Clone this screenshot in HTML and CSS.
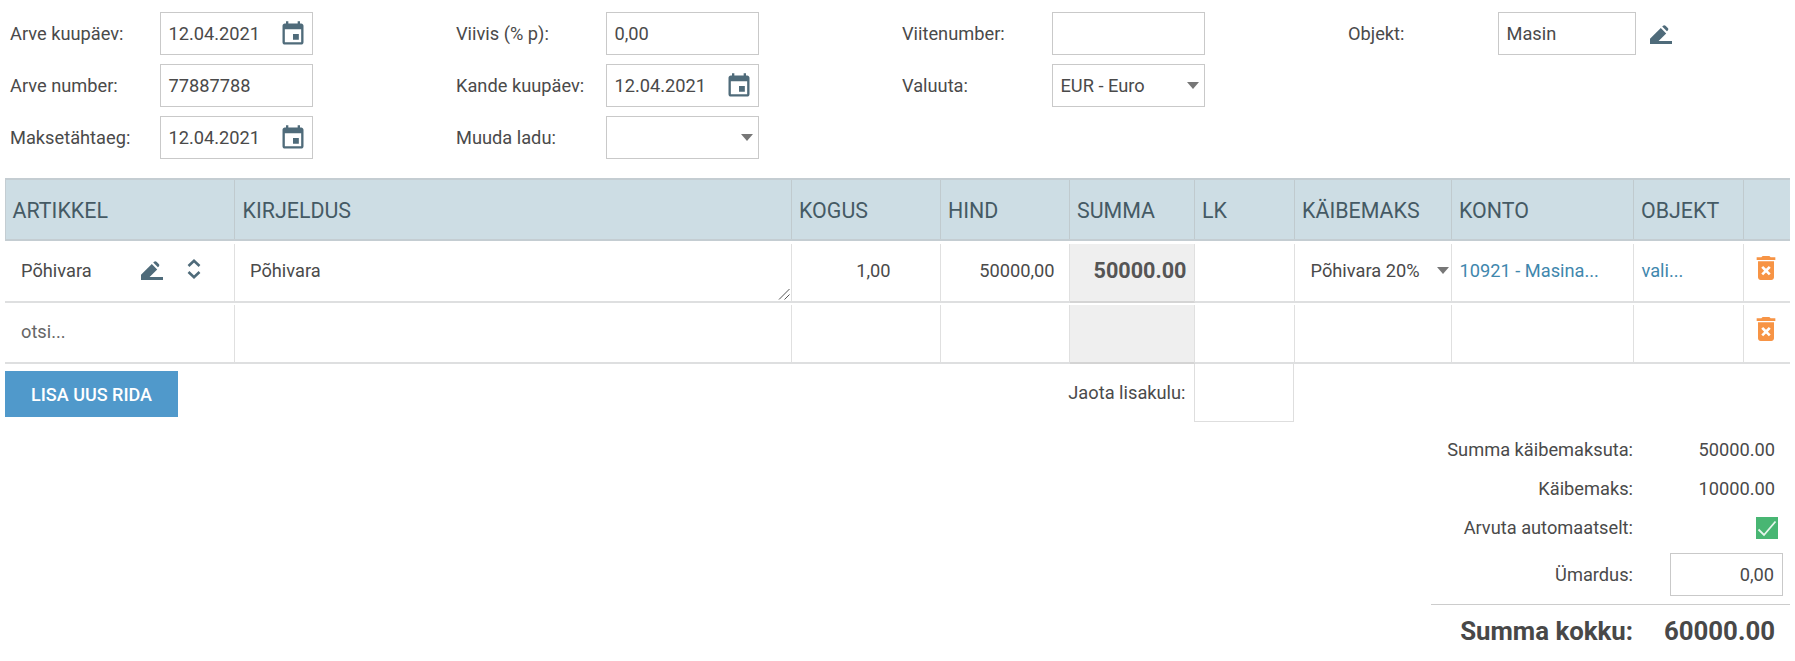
FILE: index.html
```html
<!DOCTYPE html>
<html lang="et">
<head>
<meta charset="utf-8">
<title>Arve</title>
<link rel="stylesheet" href="styles.css">
</head>
<body>
<svg class="defs" width="0" height="0" aria-hidden="true">
  <symbol id="i-cal" viewBox="0 0 24 24"><path d="M17 12h-5v5h5v-5zM16 1v2H8V1H6v2H5c-1.11 0-1.99.9-1.99 2L3 19c0 1.1.89 2 2 2h14c1.1 0 2-.9 2-2V5c0-1.1-.9-2-2-2h-1V1h-2zm3 18H5V8h14v11z"/></symbol>
  <symbol id="i-pen" viewBox="0 0 22 19"><path d="M0 19v-5.2L10.8 3l5.4 5.4L8.6 16H22v3zM12.2 1.6l.9-.9c.7-.7 1.7-.7 2.4 0l2.3 2.3c.7.7.7 1.7 0 2.4l-.9.9z"/></symbol>
  <symbol id="i-del" viewBox="0 0 24 24"><path d="M6 19c0 1.1.9 2 2 2h8c1.1 0 2-.9 2-2V7H6v12zm2.46-7.12l1.41-1.41L12 12.59l2.12-2.12 1.41 1.41L13.41 14l2.12 2.12-1.41 1.41L12 15.41l-2.12 2.12-1.41-1.41L10.59 14l-2.13-2.12zM15.5 4l-1-1h-5l-1 1H5v2h14V4z"/></symbol>
</svg>

<form class="head">
  <div class="field"><span class="lbl">Arve kuupäev:</span><span class="box"><span class="val">12.04.2021</span><svg class="ic-cal"><use href="#i-cal"/></svg></span></div>
  <div class="field"><span class="lbl">Viivis (% p):</span><span class="box"><span class="val">0,00</span></span></div>
  <div class="field"><span class="lbl">Viitenumber:</span><span class="box"></span></div>
  <div class="field"><span class="lbl">Objekt:</span><span class="box narrow"><span class="val">Masin</span></span><svg class="ic-pen top-pen"><use href="#i-pen"/></svg></div>

  <div class="field"><span class="lbl">Arve number:</span><span class="box"><span class="val">77887788</span></span></div>
  <div class="field"><span class="lbl">Kande kuupäev:</span><span class="box"><span class="val">12.04.2021</span><svg class="ic-cal"><use href="#i-cal"/></svg></span></div>
  <div class="field"><span class="lbl">Valuuta:</span><span class="box"><span class="val">EUR - Euro</span><i class="caret"></i></span></div>
  <div class="field"></div>

  <div class="field"><span class="lbl">Maksetähtaeg:</span><span class="box"><span class="val">12.04.2021</span><svg class="ic-cal"><use href="#i-cal"/></svg></span></div>
  <div class="field"><span class="lbl">Muuda ladu:</span><span class="box"><i class="caret"></i></span></div>
</form>

<section class="grid">
  <div class="row thead">
    <div class="th">ARTIKKEL</div><div class="th">KIRJELDUS</div><div class="th">KOGUS</div><div class="th">HIND</div><div class="th">SUMMA</div><div class="th">LK</div><div class="th">KÄIBEMAKS</div><div class="th">KONTO</div><div class="th">OBJEKT</div><div class="th"></div>
  </div>
  <div class="row body">
    <div class="td art"><span class="grow">Põhivara</span><svg class="ic-pen"><use href="#i-pen"/></svg><svg class="ic-sort" viewBox="0 0 14 20"><path d="M1.5 7 7 1.8 12.5 7M1.5 13 7 18.2 12.5 13"/></svg></div>
    <div class="td desc">Põhivara<svg class="handle" viewBox="0 0 12 12"><path d="M11.5 1 1 11.5M11.5 6.5 6.5 11.5"/></svg></div>
    <div class="td num qty">1,00</div>
    <div class="td num">50000,00</div>
    <div class="td sum">50000.00</div>
    <div class="td"></div>
    <div class="td vat"><span class="grow">Põhivara 20%</span><i class="caret"></i></div>
    <div class="td link">10921 - Masina...</div>
    <div class="td link">vali...</div>
    <div class="td act"><svg class="ic-del"><use href="#i-del"/></svg></div>
  </div>
  <div class="row body">
    <div class="td art muted">otsi...</div>
    <div class="td"></div>
    <div class="td"></div>
    <div class="td"></div>
    <div class="td sum"></div>
    <div class="td"></div>
    <div class="td"></div>
    <div class="td"></div>
    <div class="td"></div>
    <div class="td act"><svg class="ic-del"><use href="#i-del"/></svg></div>
  </div>
</section>

<div class="under">
  <button class="add" type="button">LISA UUS RIDA</button>
  <span class="extra-lbl">Jaota lisakulu:</span>
  <span class="extra"></span>
</div>

<section class="totals">
  <div class="t-row"><span class="t-lbl">Summa käibemaksuta:</span><span class="t-val">50000.00</span></div>
  <div class="t-row"><span class="t-lbl">Käibemaks:</span><span class="t-val">10000.00</span></div>
  <div class="t-row"><span class="t-lbl">Arvuta automaatselt:</span><span class="t-val"><span class="check"><svg viewBox="0 0 22 22"><path d="M2.5 12.5 8 18 19.5 4.5"/></svg></span></span></div>
  <div class="t-row round"><span class="t-lbl">Ümardus:</span><span class="box small"><span class="val">0,00</span></span></div>
  <div class="t-row grand"><span class="t-lbl">Summa kokku:</span><span class="t-val">60000.00</span></div>
</section>
</body>
</html>
```
FILE: styles.css
```css
* { box-sizing: border-box; }
html, body { margin: 0; padding: 0; }
body {
  width: 1795px; height: 661px; overflow: hidden; background: #fff;
  font-family: Roboto, "Liberation Sans", sans-serif;
  font-size: 18.24px; font-weight: 400; color: #4a4a4a;
}
.defs { position: absolute; }

.head {
  display: grid; grid-template-columns: repeat(4, 446px);
  grid-auto-rows: 43px; row-gap: 9px;
  padding: 12px 0 0 10px; height: 178px;
}
.field { display: flex; align-items: center; }
.lbl { width: 150px; flex: none; }
.box {
  display: flex; align-items: center; flex: none;
  width: 153px; height: 43px; padding: 0 7.5px;
  border: 1px solid #c9c9c9; background: #fff; position: relative;
}
.box.narrow { width: 138px; }
.val { flex: 1; }
.ic-cal { width: 28px; height: 28px; fill: #4f6b7a; flex: none; margin: 1px -2px 0 0; }
.ic-pen { width: 22px; height: 19px; fill: #4f6b7a; flex: none; }
.top-pen { margin: 2px 0 0 14px; }
.caret {
  width: 0; height: 0; flex: none; margin-left: auto; margin-right: -2px;
  border-left: 6px solid transparent; border-right: 6px solid transparent;
  border-top: 7px solid #777;
}

.grid { margin-left: 5px; width: 1785px; }
.row {
  display: grid;
  grid-template-columns: 230px 556.5px 149px 129px 125px 100px 157px 182px 110px 46.5px;
}
.thead {
  height: 63px; margin-bottom: 1px; background: #cddde4;
  border-top: 2px solid #c4cdd2; border-bottom: 2px solid #c4cdd2;
  box-shadow: inset 1px 0 0 #c4cdd2;
}
.th {
  padding: 2px 0 0 7.5px; display: flex; align-items: center;
  font-size: 21.4px; color: #455a64; border-right: 1px solid #c0cace;
}
.th:last-child { border-right: 0; }
.body { height: 61px; padding-top: 2px; border-bottom: 2px solid #dedfe0; }
.td {
  display: flex; align-items: center; padding: 0 8px 4px; min-width: 0;
  border-right: 1px solid #e0e0e0; position: relative;
}
.td:last-child { border-right: 0; }
.art { padding-left: 16px; }
.grow { flex: 1; }
.art .ic-sort { width: 14px; height: 20px; margin: 0 25px 4px 24px; fill: none; stroke: #4f6b7a; stroke-width: 2.6; flex: none; }
.desc { padding-left: 15px; }
.handle { position: absolute; right: 1px; bottom: 1px; width: 12px; height: 12px; fill: none; stroke: #555; stroke-width: 1; }
.num { justify-content: flex-end; padding-right: 14px; }
.qty { padding-right: 49px; }
.sum {
  justify-content: flex-end; background: #efefef; font-weight: 700; font-size: 21.6px; color: #555;
  margin-bottom: -2px; border-bottom: 2px solid #d4d4d4; padding-right: 7px;
}
.vat { padding-left: 16px; padding-right: 4px; }
.link { color: #3f87ad; padding-left: 8px; }
.act { justify-content: center; padding: 0; }
.ic-del { width: 32px; height: 32px; fill: #f79445; flex: none; margin-left: -2px; margin-bottom: 10px; }
.muted { color: #666; }

.under { display: flex; align-items: flex-start; margin-left: 5px; height: 58px; }
.add {
  margin: 7px 0 0; width: 173px; height: 46px; border: 0; background: #5099cb; color: #fff;
  font: 500 18px Roboto, sans-serif;
}
.extra-lbl { margin-left: auto; line-height: 58px; }
.extra { flex: none; width: 100px; height: 58px; margin: 0 501.5px 0 8px; border: 1px solid #dedede; border-top: 0; }

.totals { margin-left: 1431px; width: 359px; padding-top: 8px; }
.t-row { display: flex; align-items: center; height: 39px; }
.t-lbl { width: 202px; text-align: right; flex: none; }
.t-val { width: 142px; text-align: right; flex: none; }
.check { display: inline-block; width: 22px; height: 22px; background: #48b673; vertical-align: middle; margin-right: -3px; }
.check svg { display: block; fill: none; stroke: #e6f5ec; stroke-width: 1.8; }
.round { height: 43px; margin-top: 6px; }
.box.small { width: 113px; margin-left: 37px; justify-content: flex-end; padding-right: 8px; }
.box.small .val { flex: none; }
.grand {
  margin-top: 8px; height: 50px; padding-top: 3px; border-top: 1px solid #ccc;
  font-weight: 700; font-size: 25.8px; color: #484848;
}
```
